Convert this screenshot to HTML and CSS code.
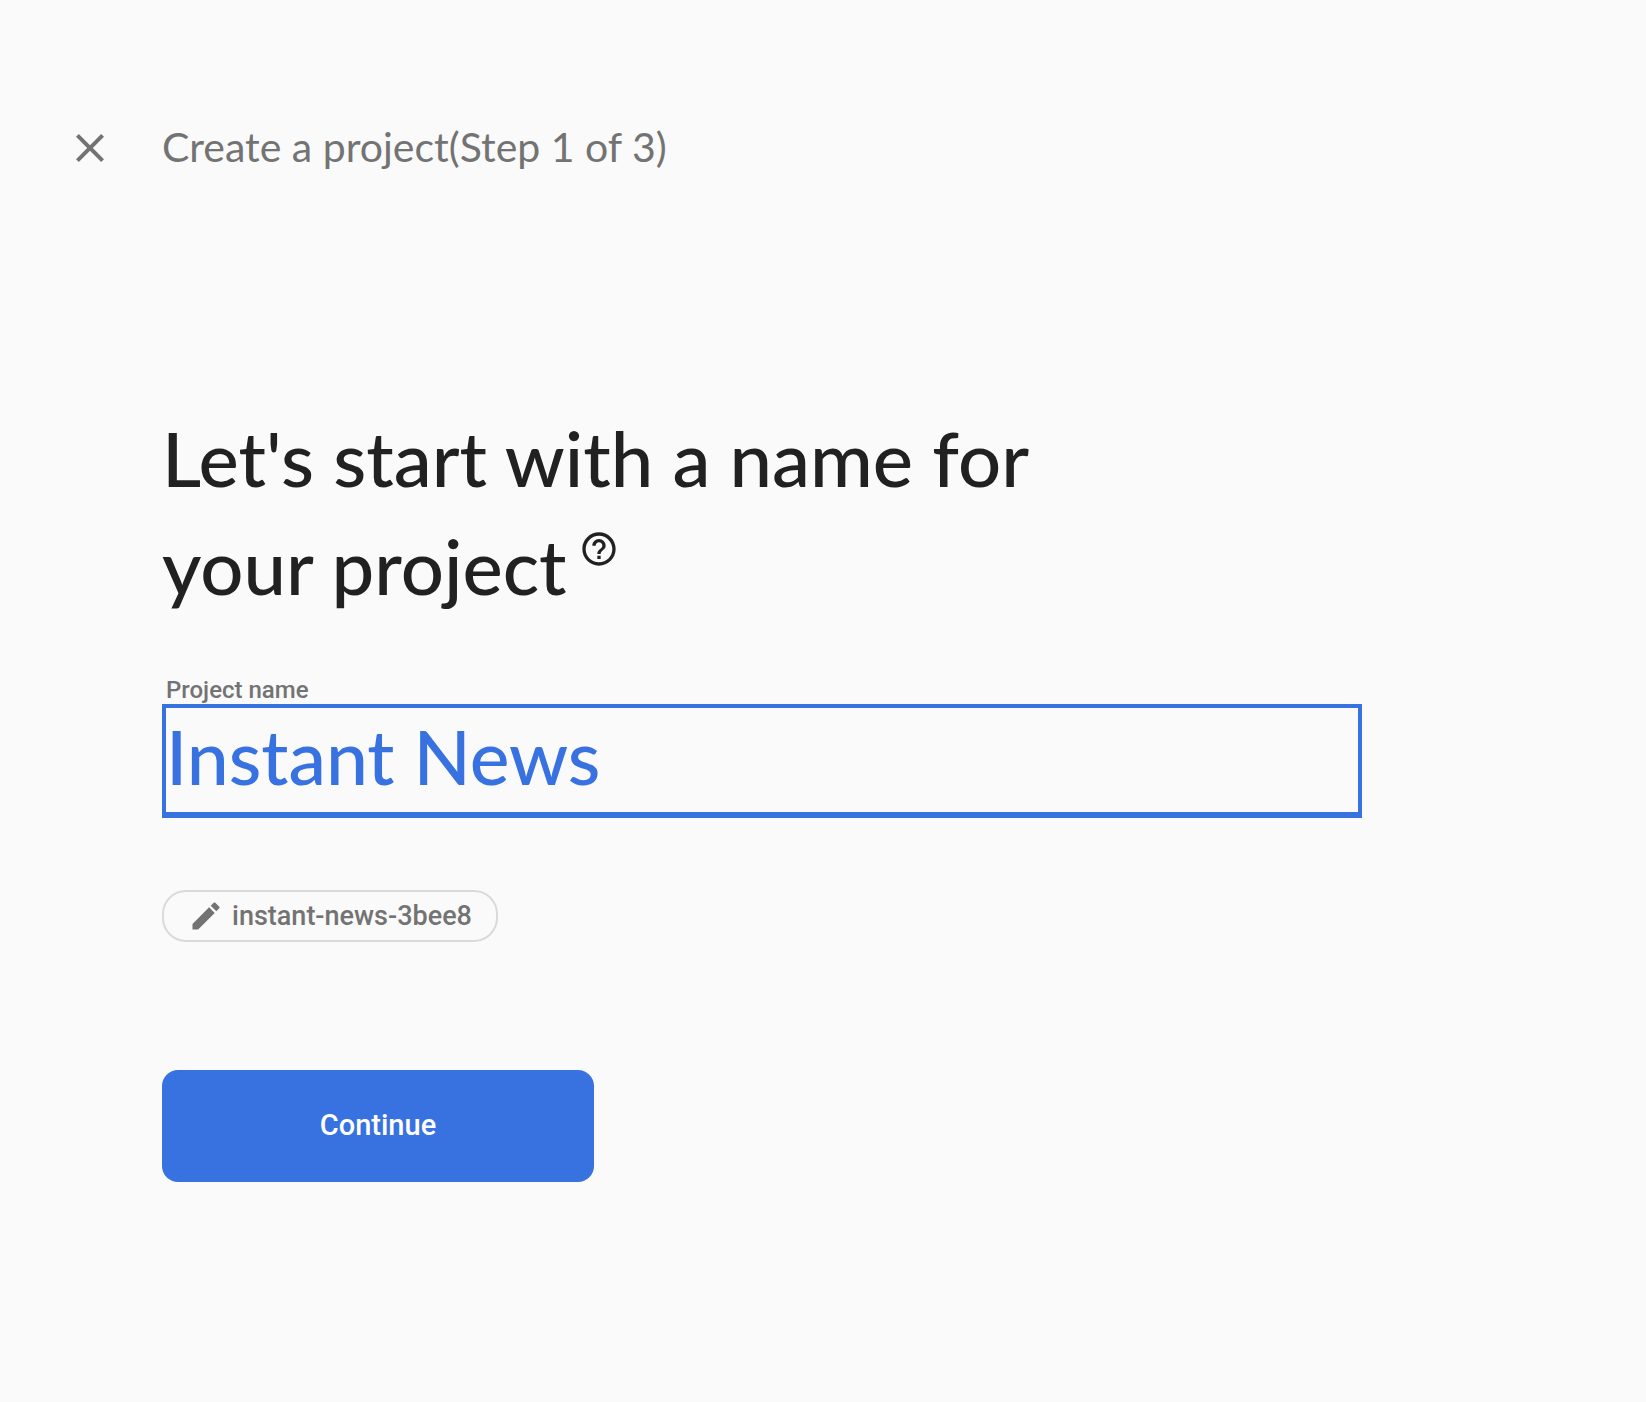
FILE: index.html
```html
<!DOCTYPE html>
<html lang="en">
<head>
<meta charset="utf-8">
<meta name="viewport" content="width=device-width, initial-scale=1">
<title>Create a project</title>
<link rel="stylesheet" href="styles.css">
</head>
<body>
<header class="topbar">
  <button class="close" type="button" aria-label="Close">
    <svg class="close-icon" viewBox="0 0 24 24" aria-hidden="true"><path d="M19 6.41 17.59 5 12 10.59 6.41 5 5 6.41 10.59 12 5 17.59 6.41 19 12 13.41 17.59 19 19 17.59 13.41 12z"/></svg>
  </button>
  <p class="step">Create a project(Step 1 of 3)</p>
</header>
<main class="content">
  <form class="form">
    <h1 class="title">Let's start with a name for your project<button class="help" type="button" aria-label="Help"><svg class="help-icon" viewBox="0 0 24 24" aria-hidden="true"><path d="M11 18h2v-2h-2v2zm1-16C6.48 2 2 6.48 2 12s4.480 10 10 10 10-4.480 10-10S17.520 2 12 2zm0 18c-4.410 0-8-3.590-8-8s3.590-8 8-8 8 3.590 8 8-3.590 8-8 8zm0-14c-2.210 0-4 1.790-4 4h2c0-1.100.9-2 2-2s2 .9 2 2c0 2-3 1.750-3 5h2c0-2.250 3-2.500 3-5 0-2.210-1.790-4-4-4z"/></svg></button></h1>
    <div class="field">
      <label class="label" for="project-name">Project name</label>
      <input class="input" id="project-name" type="text" value="Instant News">
    </div>
    <button class="chip" type="button">
      <svg class="chip-icon" viewBox="0 0 24 24" aria-hidden="true"><path d="M3 17.250V21h3.750L17.810 9.940l-3.750-3.750L3 17.250zM20.710 7.040c.39-.39.39-1.020 0-1.410l-2.340-2.340c-.39-.39-1.020-.39-1.410 0l-1.830 1.830 3.750 3.750 1.830-1.830z"/></svg>
      <span>instant-news-3bee8</span>
    </button>
    <button class="continue" type="submit">Continue</button>
  </form>
</main>
</body>
</html>
```
FILE: styles.css
```css
* {
  box-sizing: border-box;
}

body {
  margin: 0;
  background: #fafafa;
  color: #212121;
  font-family: Roboto, sans-serif;
}

button {
  border: 0;
  margin: 0;
  padding: 0;
  background: none;
  color: inherit;
  font: inherit;
  cursor: pointer;
}

svg {
  display: block;
  fill: currentColor;
}

.topbar {
  display: flex;
  align-items: center;
  gap: 48px;
  padding: 121px 66px 0;
  color: #737373;
}

.close-icon {
  width: 48px;
  height: 48px;
}

.step {
  margin: 0;
  padding-bottom: 2px;
  font-family: Lato, sans-serif;
  font-size: 41px;
  line-height: 52px;
}

.content {
  padding: 229px 162px 80px;
}

.form {
  display: flex;
  flex-direction: column;
  align-items: flex-start;
  max-width: 1200px;
}

.title {
  max-width: 960px;
  margin: 0;
  font-family: Lato, sans-serif;
  font-size: 76px;
  font-weight: 500;
  line-height: 108px;
}

.help {
  margin-left: 12px;
  line-height: 0;
  vertical-align: 26px;
}

.help-icon {
  width: 40px;
  height: 40px;
}

.field {
  display: flex;
  flex-direction: column;
  width: 100%;
  margin-top: 56px;
}

.label {
  padding-left: 4px;
  color: #737373;
  font-size: 24px;
  font-weight: 500;
  line-height: 28px;
}

.input {
  width: 100%;
  height: 114px;
  padding: 0 0 8px;
  border: 4px solid #3871e0;
  border-bottom-width: 6px;
  outline: 0;
  background: transparent;
  color: #3871e0;
  font-family: Lato, sans-serif;
  font-size: 75px;
  font-weight: 500;
}

.chip {
  display: flex;
  align-items: center;
  gap: 8px;
  height: 52px;
  margin-top: 72px;
  padding: 0 24px;
  border: 2px solid #dadada;
  border-radius: 24px;
  color: #737373;
  font-size: 27px;
  font-weight: 500;
}

.chip-icon {
  width: 36px;
  height: 36px;
}

.continue {
  width: 432px;
  max-width: 100%;
  height: 112px;
  margin-top: 128px;
  padding-bottom: 2px;
  border-radius: 16px;
  background: #3871e0;
  color: #fff;
  font-size: 29px;
  font-weight: 500;
}
```
